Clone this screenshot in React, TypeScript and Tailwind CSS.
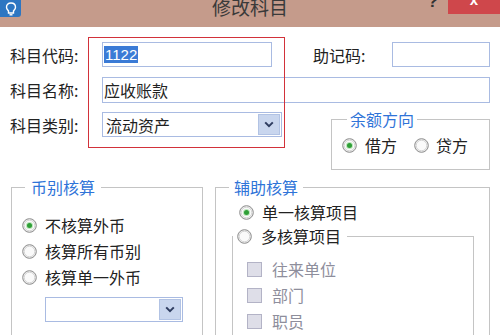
import React from 'react';

const font = { fontFamily: '"Noto Sans CJK SC", "Noto Sans", sans-serif' };

function Radio({ checked = false }: { checked?: boolean }) {
  return (
    <svg width="15" height="15" viewBox="0 0 15 15" className="shrink-0">
      <circle cx="7.5" cy="7.5" r="6.8" fill="#eeeeee" stroke="#8a8a8a" strokeWidth="1" />
      <circle cx="7.5" cy="7.5" r="5.3" fill="#fafafa" stroke="#d4d4d4" strokeWidth="1" />
      {checked && <circle cx="7.5" cy="7.5" r="3.6" fill="#bfe6bf" />}
      {checked && <circle cx="7.5" cy="7.5" r="2.5" fill="#2e9f36" />}
    </svg>
  );
}

function Checkbox() {
  return (
    <span className="w-[15px] h-[15px] shrink-0 border border-[#b3b3c6] bg-[#dedee8]" />
  );
}

function Chevron() {
  return (
    <svg width="10" height="7" viewBox="0 0 10 7">
      <path d="M1.2 1.4 L5 5.2 L8.8 1.4" fill="none" stroke="#2f3d60" strokeWidth="2" />
    </svg>
  );
}

function Select({ value, className }: { value?: string; className: string }) {
  return (
    <div className={`flex items-center border border-[#a9bbe2] bg-white ${className}`}>
      <span className="flex-1 pl-[3px] text-[16px] leading-none text-[#1f1f1f]">{value}</span>
      <span className="w-[22px] h-[21px] mr-px flex items-center justify-center bg-[#c9d6ee] border border-[#b2c3e4]">
        <Chevron />
      </span>
    </div>
  );
}

export default function App() {
  return (
    <div className="w-[500px] h-[335px] overflow-hidden relative bg-white text-[#222]" style={font}>
      {/* Title bar */}
      <div className="h-[27px] bg-[#c59b8b] flex items-start relative">
        <div className="w-[21px] h-[17px] rounded-br-[3px] bg-[#2d76c2] flex items-center justify-center">
          <svg width="12" height="14" viewBox="0 0 12 14">
            <path d="M6 1 C3 1 1.5 3 1.5 5.2 C1.5 7 2.8 8 3.5 9 L3.5 11 L8.5 11 L8.5 9 C9.2 8 10.5 7 10.5 5.2 C10.5 3 9 1 6 1 Z" fill="none" stroke="#fff" strokeWidth="1.4" />
            <path d="M4.5 12.8 L7.5 12.8" stroke="#fff" strokeWidth="1.4" />
          </svg>
        </div>
        <span className="absolute left-0 right-0 top-[-3px] text-center text-[19px] leading-[19px] text-[#3a3a3a]">修改科目</span>
        <span className="ml-auto text-[17px] leading-[17px] -mt-[7px] mr-[10px] font-bold text-[#333]" style={{ fontFamily: '"Liberation Sans", sans-serif' }}>?</span>
        <div className="w-[52px] h-[14px] bg-[#cf474b] flex justify-center">
          <span className="text-white text-[15px] leading-[15px] -mt-[8px] font-bold" style={{ fontFamily: '"Liberation Sans", sans-serif' }}>x</span>
        </div>
      </div>

      <div className="flex flex-col pl-[10px] pr-[10px]">
        {/* Row: code */}
        <div className="flex items-center h-[25px] mt-[15px]">
          <span className="w-[92px] text-[16px] leading-none">科目代码:</span>
          <div className="w-[170px] h-[25px] border border-[#a9bbe2] flex items-center pl-px">
            <span className="bg-[#3b7bd6] text-white text-[15px] leading-[17px] px-px" style={{ fontFamily: '"Liberation Sans", sans-serif' }}>1122</span>
          </div>
          <span className="ml-[41px] w-[79px] text-[16px] leading-none">助记码:</span>
          <div className="flex-1 h-[25px] border border-[#a9bbe2]" />
        </div>

        {/* Row: name */}
        <div className="flex items-center mt-[10px]">
          <span className="w-[92px] text-[16px] leading-none">科目名称:</span>
          <div className="flex-1 h-[26px] border border-[#a9bbe2] flex items-center pl-px">
            <span className="text-[16px] leading-none">应收账款</span>
          </div>
        </div>

        {/* Row: type + balance direction */}
        <div className="flex items-start mt-[6px]">
          <div className="flex items-center mt-[3px] h-[25px]">
            <span className="w-[92px] text-[16px] leading-none">科目类别:</span>
            <Select value="流动资产" className="w-[180px] h-[25px]" />
          </div>
          <fieldset className="ml-auto w-[159px] h-[61px] border border-[#c4c4c4]">
            <legend className="ml-[15px] px-[3px] text-[16px] leading-[20px] text-[#2f74d8]">余额方向</legend>
            <div className="flex items-center h-[20px] mt-[6px] pl-[10px]">
              <Radio checked />
              <span className="ml-[8px] text-[16px] leading-none">借方</span>
              <span className="ml-[17px]"><Radio /></span>
              <span className="ml-[7px] text-[16px] leading-none">贷方</span>
            </div>
          </fieldset>
        </div>

        {/* Bottom groups */}
        <div className="flex items-start mt-[7px]">
          <fieldset className="ml-px w-[192px] h-[200px] border border-[#c4c4c4]">
            <legend className="ml-[13px] px-[6px] text-[16px] leading-[20px] text-[#2f74d8]">币别核算</legend>
            <div className="flex flex-col pt-[15px] pl-[10px]">
              <div className="flex items-center h-[26px]">
                <Radio checked />
                <span className="ml-[8px] text-[16px] leading-none">不核算外币</span>
              </div>
              <div className="flex items-center h-[26px]">
                <Radio />
                <span className="ml-[8px] text-[16px] leading-none">核算所有币别</span>
              </div>
              <div className="flex items-center h-[26px]">
                <Radio />
                <span className="ml-[8px] text-[16px] leading-none">核算单一外币</span>
              </div>
              <Select className="ml-[23px] mt-[7px] w-[138px] h-[25px]" />
            </div>
          </fieldset>

          <fieldset className="ml-[12px] flex-1 h-[200px] border border-[#c4c4c4]">
            <legend className="ml-[13px] px-[5px] text-[16px] leading-[20px] text-[#2f74d8]">辅助核算</legend>
            <div className="flex flex-col pt-[2px]">
              <div className="flex items-center h-[26px] pl-[23px]">
                <Radio checked />
                <span className="ml-[8px] text-[16px] leading-none">单一核算项目</span>
              </div>
              <fieldset className="ml-[16px] -mt-[2px] w-[242px] h-[120px] border border-[#c4c4c4]">
                <legend className="pl-[4px] pr-[6px] h-[26px] flex items-center">
                  <Radio />
                  <span className="ml-[9px] text-[16px] leading-none">多核算项目</span>
                </legend>
                <div className="flex flex-col pt-[7px] pl-[14px] text-[#8e8e9c]">
                  <div className="flex items-center h-[26px]">
                    <Checkbox />
                    <span className="ml-[10px] text-[16px] leading-none">往来单位</span>
                  </div>
                  <div className="flex items-center h-[26px]">
                    <Checkbox />
                    <span className="ml-[10px] text-[16px] leading-none">部门</span>
                  </div>
                  <div className="flex items-center h-[26px]">
                    <Checkbox />
                    <span className="ml-[10px] text-[16px] leading-none">职员</span>
                  </div>
                </div>
              </fieldset>
            </div>
          </fieldset>
        </div>
      </div>

      {/* highlight frame drawn over the first three fields */}
      <div className="absolute left-[88px] top-[37px] w-[197px] h-[111px] border border-[#d2323a] pointer-events-none" />
    </div>
  );
}
